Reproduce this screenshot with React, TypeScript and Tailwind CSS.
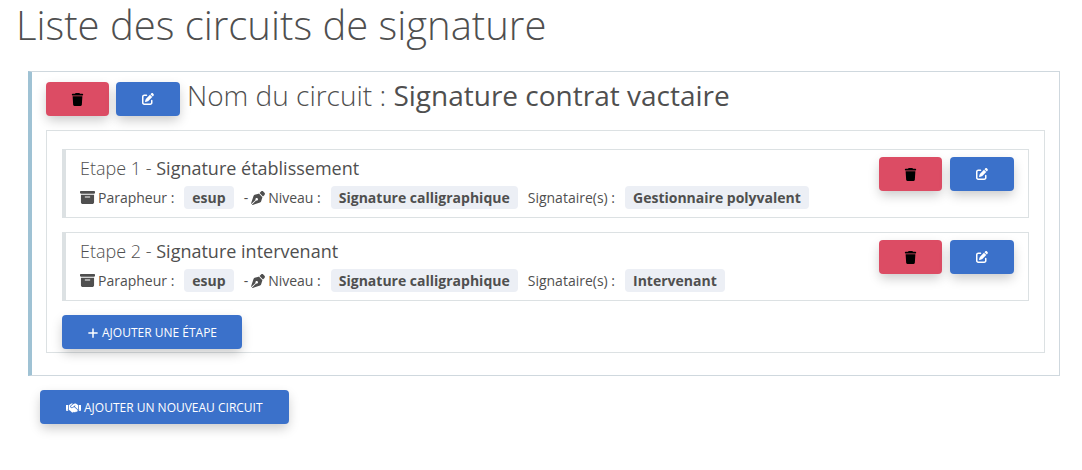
import type { ButtonHTMLAttributes, ReactNode } from "react";
import {
  FaBoxArchive,
  FaHandshake,
  FaPenNib,
  FaPenToSquare,
  FaPlus,
  FaTrash,
} from "react-icons/fa6";

interface Step {
  name: string;
  parapheur: string;
  level: string;
  signer: string;
}

const steps: Step[] = [
  {
    name: "Signature établissement",
    parapheur: "esup",
    level: "Signature calligraphique",
    signer: "Gestionnaire polyvalent",
  },
  {
    name: "Signature intervenant",
    parapheur: "esup",
    level: "Signature calligraphique",
    signer: "Intervenant",
  },
];

const buttonBase =
  "inline-flex h-[34px] cursor-pointer items-center justify-center rounded text-xs uppercase shadow-[0_5px_12px_-1px_rgba(0,0,0,0.22)]";

function PrimaryButton({ className = "", ...props }: ButtonHTMLAttributes<HTMLButtonElement>) {
  return (
    <button type="button" className={`${buttonBase} bg-[#3b71ca] text-white ${className}`} {...props} />
  );
}

function RowActions({ className = "" }: { className?: string }) {
  return (
    <div className={`flex shrink-0 ${className}`}>
      <button type="button" aria-label="Supprimer" className={`${buttonBase} w-[63px] bg-[#dc4c64] text-black`}>
        <FaTrash size={13} />
      </button>
      <PrimaryButton aria-label="Modifier" className="w-16">
        <FaPenToSquare size={12} />
      </PrimaryButton>
    </div>
  );
}

function Badge({ children }: { children: ReactNode }) {
  return <b className="rounded bg-[#eceff5] px-2 leading-[23px] font-bold">{children}</b>;
}

function StepCard({ step, index }: { step: Step; index: number }) {
  return (
    <li className="flex items-start justify-between border border-l-4 border-[#dce1e3] pt-[7px] pr-[14px] pb-2 pl-[14px]">
      <div>
        <h3 className="text-lg leading-[22px] font-light">
          Etape {index} - <span className="font-normal">{step.name}</span>
        </h3>
        <div className="mt-[7px] flex flex-wrap items-center gap-x-[10px] text-sm leading-[23px]">
          <span className="flex items-center gap-[3px]">
            <FaBoxArchive size={15} />
            Parapheur :
          </span>
          <Badge>{step.parapheur}</Badge>
          <span className="flex items-center gap-[3px]">
            -
            <FaPenNib size={14} />
            Niveau :
          </span>
          <Badge>{step.level}</Badge>
          <span>Signataire(s) :</span>
          <Badge>{step.signer}</Badge>
        </div>
      </div>
      <RowActions className="gap-2" />
    </li>
  );
}

export default function App() {
  return (
    <main className="px-4 pb-8 font-['Open_Sans',sans-serif] text-[#4f4f4f]">
      <h1 className="text-[40px] leading-[50px] font-light">Liste des circuits de signature</h1>

      <section className="mt-[21px] mr-[6px] ml-3 border border-l-4 border-[#cfd8de] border-l-[#9fc2d4] px-[14px] pt-[10px] pb-[22px]">
        <header className="flex items-start gap-[7px]">
          <RowActions className="gap-[7px]" />
          <h2 className="text-[28px] leading-[26px] font-light">
            Nom du circuit : <span className="font-normal">Signature contrat vactaire</span>
          </h2>
        </header>

        <div className="mt-[14px] border border-[#dce1e3] px-[15px] pt-[18px] pb-[3px]">
          <ol className="flex flex-col gap-[14px]">
            {steps.map((step, i) => (
              <StepCard key={step.name} step={step} index={i + 1} />
            ))}
          </ol>
          <PrimaryButton className="mt-[14px] gap-[3px] px-[25px] pt-0.5">
            <FaPlus size={12} />
            Ajouter une étape
          </PrimaryButton>
        </div>
      </section>

      <PrimaryButton className="mt-[14px] ml-6 gap-[3px] px-[26px] pt-0.5">
        <FaHandshake className="h-3 w-[15px]" />
        Ajouter un nouveau circuit
      </PrimaryButton>
    </main>
  );
}
